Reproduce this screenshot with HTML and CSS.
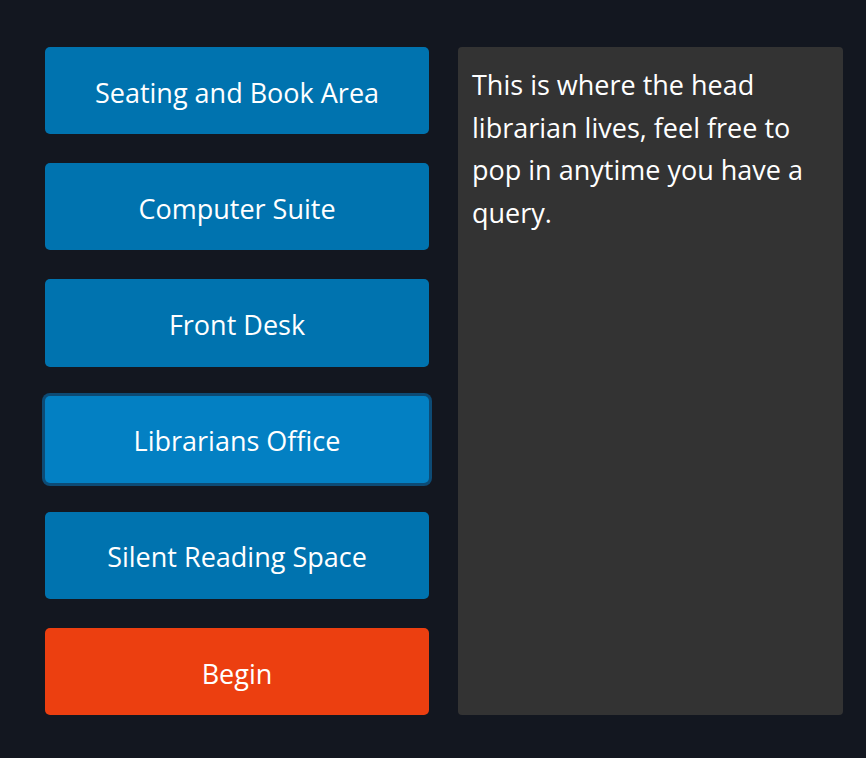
FILE: index.html
```html
<!DOCTYPE html>
<html>
<head>
<meta charset="utf-8">
<link rel="stylesheet" href="styles.css">
</head>
<body>
<div class="layout">
  <div class="menu">
    <button class="btn">Seating and Book Area</button>
    <button class="btn">Computer Suite</button>
    <button class="btn">Front Desk</button>
    <button class="btn selected">Librarians Office</button>
    <button class="btn">Silent Reading Space</button>
    <button class="btn begin">Begin</button>
  </div>
  <div class="panel">
    <p class="desc">This is where the head librarian lives, feel free to pop in anytime you have a query.</p>
  </div>
</div>
</body>
</html>
```
FILE: styles.css
```css
html, body {
  margin: 0;
  padding: 0;
  background: #131720;
  height: 100%;
}
body {
  font-family: "Open Sans", "Noto Sans", sans-serif;
  color: #ffffff;
}
.layout {
  display: grid;
  grid-template-columns: 384px 385px;
  column-gap: 29px;
  padding: 47px 23px 43px 45px;
}
.menu {
  display: flex;
  flex-direction: column;
  gap: 29px;
}
.btn {
  height: 87.2px;
  border: none;
  border-radius: 5px;
  background: #0073af;
  color: #ffffff;
  font-family: inherit;
  font-size: 27px;
  padding: 3px 0 0 0;
  cursor: pointer;
}
.btn.selected {
  background: #0380c3;
  box-shadow: 0 0 0 3px #0d4b75;
}
.btn.begin {
  background: #ec3f10;
}
.panel {
  background: #333333;
  border-radius: 4px;
  padding: 17px 14px;
}
.desc {
  margin: 0;
  font-size: 27px;
  line-height: 42.5px;
}
```
